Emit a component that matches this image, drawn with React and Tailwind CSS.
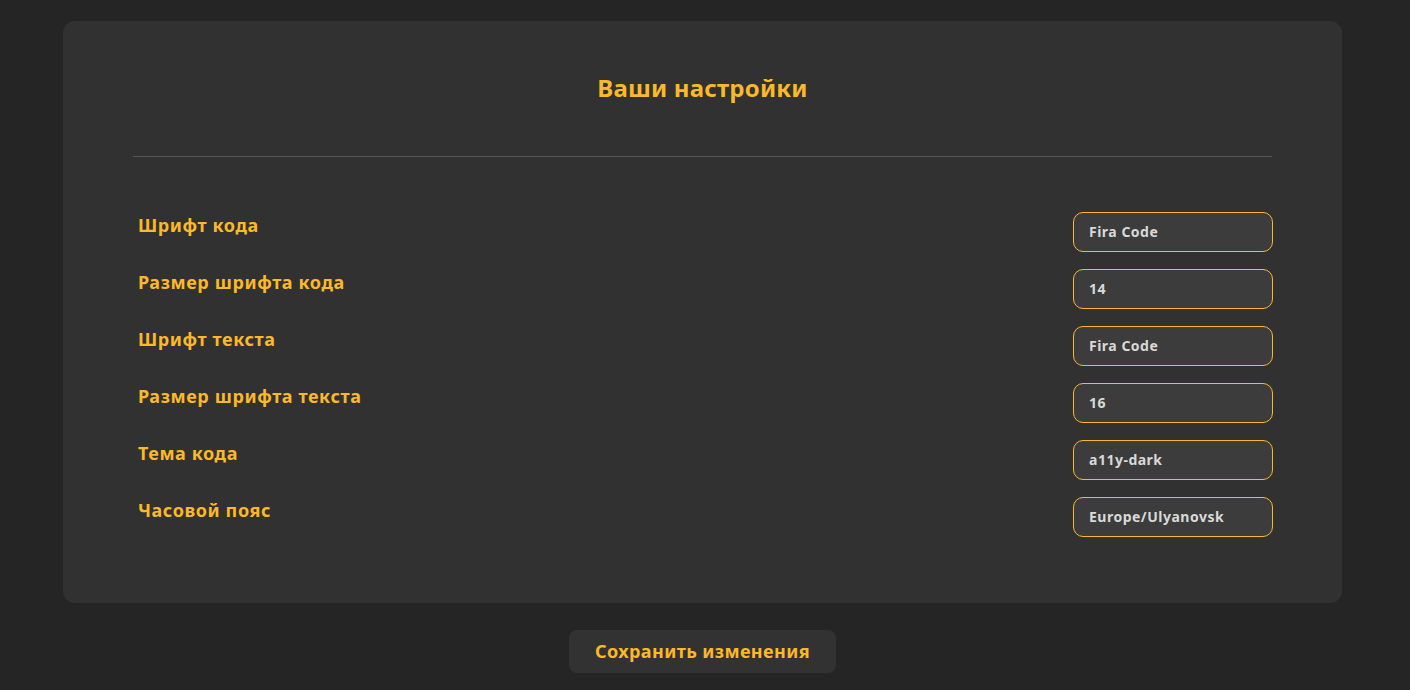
const settings = [
  { label: "Шрифт кода", value: "Fira Code" },
  { label: "Размер шрифта кода", value: "14" },
  { label: "Шрифт текста", value: "Fira Code" },
  { label: "Размер шрифта текста", value: "16" },
  { label: "Тема кода", value: "a11y-dark" },
  { label: "Часовой пояс", value: "Europe/Ulyanovsk" },
];

export default function App() {
  return (
    <div
      className="min-h-screen bg-[#252525] pt-[21px] pb-[18px]"
      style={{ fontFamily: "'Noto Sans', Lato, sans-serif" }}
    >
      <div className="ml-[63px] mr-[68px] h-[582px] rounded-xl bg-[#313131] px-[70px]">
        <h1 className="pt-[51px] pb-[52px] text-center text-[24px] font-bold leading-[32px] tracking-[0.2px] text-[#fbb829]">
          Ваши настройки
        </h1>
        <hr className="border-0 border-t border-[#555555]" />
        <div className="mt-[55px] flex flex-col gap-[17px]">
          {settings.map((s) => (
            <div key={s.label} className="flex items-start justify-between">
              <label className="pl-[5px] pt-[1px] text-[18px] font-bold leading-[25px] tracking-[0.6px] text-[#fbb829]">
                {s.label}
              </label>
              <input
                defaultValue={s.value}
                className="mr-[-1px] h-[40px] w-[200px] rounded-[10px] border border-[#fbb829] bg-[#3c3c3c] px-[15px] pb-[1px] text-[14px] font-bold tracking-[0.5px] text-[#d9d9d9] outline-none"
              />
            </div>
          ))}
        </div>
      </div>
      <div className="ml-[63px] mr-[68px] mt-[27px] flex justify-center">
        <button className="h-[43px] w-[267px] rounded-lg bg-[#323232] text-[18px] font-bold tracking-[0.4px] text-[#fbb829]">
          Сохранить изменения
        </button>
      </div>
    </div>
  );
}
